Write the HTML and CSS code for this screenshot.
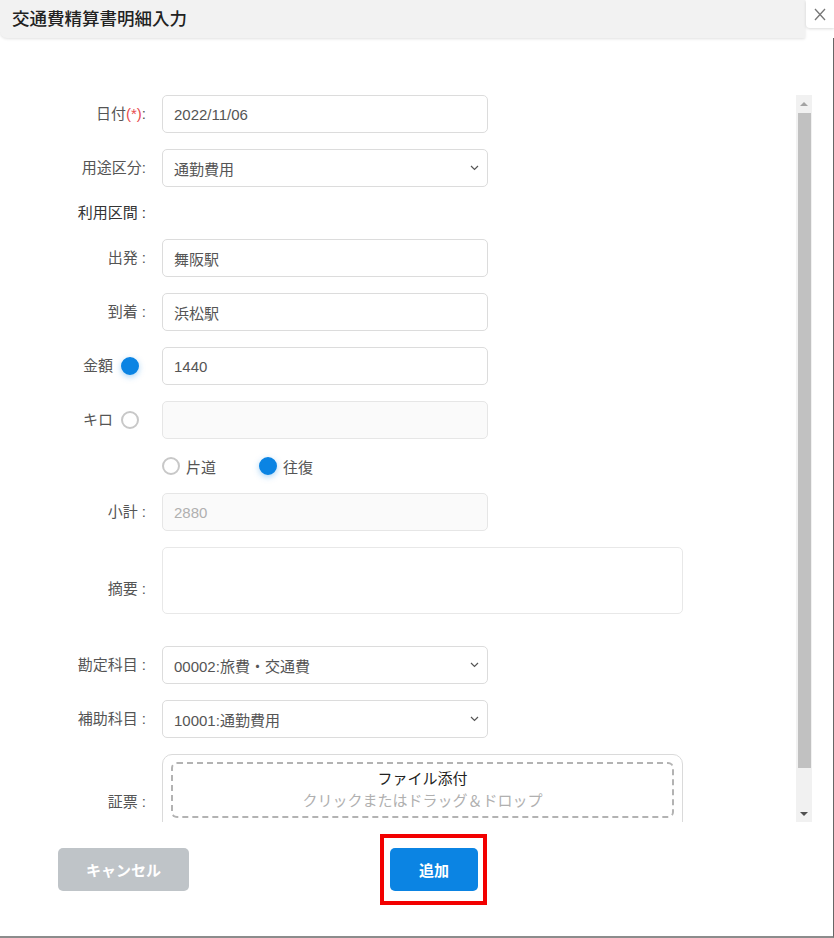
FILE: index.html
```html
<!DOCTYPE html>
<html lang="ja">
<head>
<meta charset="utf-8">
<title>交通費精算書明細入力</title>
<link rel="stylesheet" href="styles.css">
</head>
<body>
<div class="dialog">
  <header class="head">
    <h1 class="title">交通費精算書明細入力</h1>
    <div class="close">
      <svg width="12" height="13" viewBox="0 0 12 13"><path d="M1 1l10 11M11 1L1 12" stroke="#777" stroke-width="1.3" fill="none"/></svg>
    </div>
  </header>
  <main class="main">
    <div class="scroll">
      <div class="form">
        <div class="lbl">日付<span class="req">(*)</span>:</div>
        <div class="ctl"><div class="input">2022/11/06</div></div>

        <div class="lbl">用途区分:</div>
        <div class="ctl"><div class="input select">通勤費用<svg class="chev" width="9" height="6" viewBox="0 0 9 6"><path d="M1 1l3.5 3.5L8 1" stroke="#555" stroke-width="1.2" fill="none"/></svg></div></div>

        <div class="lbl strong">利用区間 :</div>
        <div class="ctl short"></div>

        <div class="lbl">出発 :</div>
        <div class="ctl"><div class="input">舞阪駅</div></div>

        <div class="lbl">到着 :</div>
        <div class="ctl"><div class="input">浜松駅</div></div>

        <div class="lbl">金額 <span class="radio on lblradio"></span></div>
        <div class="ctl"><div class="input">1440</div></div>

        <div class="lbl">キロ <span class="radio lblradio"></span></div>
        <div class="ctl"><div class="input disabled"></div></div>

        <div class="lbl"></div>
        <div class="ctl radios">
          <span class="opt"><span class="radio"></span>片道</span>
          <span class="opt"><span class="radio on"></span>往復</span>
        </div>

        <div class="lbl">小計 :</div>
        <div class="ctl"><div class="input disabled muted">2880</div></div>

        <div class="lbl">摘要 :</div>
        <div class="ctl tall"><div class="area"></div></div>

        <div class="lbl">勘定科目 :</div>
        <div class="ctl"><div class="input select">00002:旅費・交通費<svg class="chev" width="9" height="6" viewBox="0 0 9 6"><path d="M1 1l3.5 3.5L8 1" stroke="#555" stroke-width="1.2" fill="none"/></svg></div></div>

        <div class="lbl">補助科目 :</div>
        <div class="ctl"><div class="input select">10001:通勤費用<svg class="chev" width="9" height="6" viewBox="0 0 9 6"><path d="M1 1l3.5 3.5L8 1" stroke="#555" stroke-width="1.2" fill="none"/></svg></div></div>

        <div class="lbl">証票 :</div>
        <div class="ctl file">
          <div class="upload">
            <div class="drop">
              <div class="drop-title">ファイル添付</div>
              <div class="drop-hint">クリックまたはドラッグ＆ドロップ</div>
            </div>
          </div>
        </div>
      </div>
      <div class="sbar">
        <div class="sb-btn"><span class="tri-up"></span></div>
        <div class="sb-thumb"></div>
        <div class="sb-track"></div>
        <div class="sb-btn"><span class="tri-down"></span></div>
      </div>
    </div>
  </main>
  <footer class="foot">
    <button class="btn cancel">キャンセル</button>
    <span class="mark"><button class="btn add">追加</button></span>
  </footer>
</div>
</body>
</html>
```
FILE: styles.css
```css
* { box-sizing: border-box; }
html, body { margin: 0; padding: 0; }
body {
  width: 834px;
  height: 938px;
  overflow: hidden;
  background: #fff;
  font-family: "Liberation Sans", "Noto Sans CJK JP", sans-serif;
  color: #555;
}
.dialog {
  width: 834px;
  height: 938px;
  display: flex;
  flex-direction: column;
}
.head {
  display: flex;
  height: 38px;
  flex: 0 0 38px;
}
.title {
  flex: 1;
  margin: 0;
  height: 38px;
  background: #f2f2f2;
  border-bottom-left-radius: 7px;
  box-shadow: 0 1px 3px rgba(0,0,0,0.12);
  font-size: 17.5px;
  font-weight: 500;
  color: #222;
  line-height: 38px;
  padding-left: 12px;
}
.close {
  width: 28px;
  height: 28px;
  margin-left: 1px;
  background: #fff;
  border-bottom-left-radius: 4px;
  box-shadow: 0 1px 3px rgba(0,0,0,0.15);
  display: flex;
  align-items: center;
  justify-content: center;
}
.main {
  flex: 1;
  padding-top: 57px;
  border-right: 1px solid #666;
}
.scroll {
  height: 727px;
  display: flex;
}
.form {
  width: 796px;
  height: 727px;
  overflow: hidden;
  display: grid;
  grid-template-columns: 146px 1fr;
  column-gap: 16px;
  row-gap: 16px;
  align-content: start;
}
.lbl {
  align-self: center;
  text-align: right;
  font-size: 15px;
  line-height: 20px;
  color: #555;
  white-space: nowrap;
  display: flex;
  justify-content: flex-end;
  align-items: center;
}
.lbl.strong { color: #333; }
.req { color: #e74c4c; }
.ctl { min-height: 38px; }
.ctl.short { min-height: 20px; height: 20px; }
.input {
  width: 326px;
  height: 38px;
  border: 1px solid #dcdcdc;
  border-radius: 5px;
  background: #fff;
  padding: 0 11px;
  display: flex;
  align-items: center;
  font-size: 15px;
  color: #555;
}
.input.disabled { background: #fafafa; border-color: #e6e6e6; }
.input.muted { color: #b0b0b0; }
.select { justify-content: space-between; }
.chev { margin-right: -3px; }
.radio {
  display: inline-block;
  width: 18px;
  height: 18px;
  border-radius: 50%;
  border: 2px solid #c8c8c8;
  background: #fff;
  flex: 0 0 18px;
}
.radio.on {
  border-color: #0b84e3;
  background: #0b84e3;
  box-shadow: 0 2px 6px rgba(11,132,227,0.35);
}
.lblradio { margin-left: 8px; margin-right: 7px; }
.radios {
  min-height: 22px;
  height: 22px;
  display: flex;
  align-items: center;
  font-size: 15px;
  color: #555;
}
.opt { display: flex; align-items: center; gap: 6px; }
.opt + .opt { margin-left: 43px; }
.ctl.tall { height: 83px; }
.area {
  width: 521px;
  height: 67px;
  border: 1px solid #e8e8e8;
  border-radius: 5px;
}
.ctl.file { height: 96px; }
.upload {
  width: 521px;
  height: 96px;
  border: 1px solid #dadada;
  border-radius: 10px;
  padding: 7px 8px;
}
.drop {
  border: 2px dashed #b3b3b3;
  border-radius: 6px;
  padding: 4px 0;
  text-align: center;
  font-size: 15px;
  line-height: 22px;
}
.drop-title { color: #222; }
.drop-hint { color: #b0b0b0; }
.sbar {
  width: 16px;
  height: 727px;
  background: #f1f1f1;
  display: flex;
  flex-direction: column;
}
.sb-btn {
  height: 17px;
  display: flex;
  align-items: center;
  justify-content: center;
}
.sb-thumb {
  height: 655px;
  margin: 1px 1px 0 2px;
  background: #c1c1c1;
}
.sb-track { flex: 1; }
.tri-up {
  width: 0; height: 0;
  border-left: 4px solid transparent;
  border-right: 4px solid transparent;
  border-bottom: 4px solid #a3a3a3;
}
.tri-down {
  width: 0; height: 0;
  border-left: 4px solid transparent;
  border-right: 4px solid transparent;
  border-top: 4px solid #505050;
}
.foot {
  flex: 0 0 116px;
  border-right: 1px solid #666;
  border-bottom: 2px solid #8c8c8c;
  display: flex;
  align-items: flex-start;
  padding-top: 12px;
  padding-left: 58px;
}
.btn {
  border: none;
  border-radius: 5px;
  height: 43px;
  color: #fff;
  font-family: "Liberation Sans", "Noto Sans CJK JP", sans-serif;
  font-size: 15px;
  font-weight: 700;
  padding: 0;
}
.cancel {
  width: 131px;
  background: #bfc4c8;
  margin-top: 14px;
}
.mark {
  margin-left: 191px;
  border: 4px solid #f20000;
  padding: 10px 5px 10px 6px;
  display: flex;
}
.add {
  width: 88px;
  background: #0b84e3;
}
```
